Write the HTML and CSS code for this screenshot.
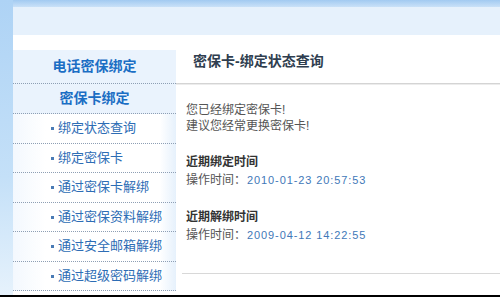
FILE: index.html
```html
<!doctype html>
<html>
    <head>
    <meta charset="utf-8">
    <title>密保卡</title>
    <link rel="stylesheet" href="styles.css">
    </head>

    <body>
        <div class="page">
            <div class="strip"></div>
            <div class="main">
                <div class="topbar"></div>
                <div class="band"></div>
                <div class="spacer"></div>
                <div class="content">
                    <div class="sidebar">
                        <div class="menu-head first">电话密保绑定</div>
                        <div class="menu-head">密保卡绑定</div>
                        <div class="menu-item">绑定状态查询</div>
                        <div class="menu-item">绑定密保卡</div>
                        <div class="menu-item">通过密保卡解绑</div>
                        <div class="menu-item">通过密保资料解绑</div>
                        <div class="menu-item">通过安全邮箱解绑</div>
                        <div class="menu-item">通过超级密码解绑</div>
                    </div>
                    <div class="panel">
                        <div class="panel-title">密保卡-绑定状态查询</div>
                        <div class="panel-body">
                            <p class="note">您已经绑定密保卡!<br>建议您经常更换密保卡!</p>
                            <div class="section">
                                <div class="sec-head">近期绑定时间</div>
                                <div class="sec-row">操作时间：<span class="date">2010-01-23 20:57:53</span></div>
                            </div>
                            <div class="section">
                                <div class="sec-head">近期解绑时间</div>
                                <div class="sec-row">操作时间：<span class="date">2009-04-12 14:22:55</span></div>
                            </div>
                            <div class="rule"></div>
                        </div>
                    </div>
                </div>
            </div>
        </div>
        <div class="bottom"></div>
    </body>
</html>
```

FILE: styles.css
```css
body {
    margin: 0;
    width: 500px;
    height: 297px;
    overflow: hidden;
    background: #fff;
    font-family: "Liberation Sans", "Noto Sans CJK SC", sans-serif;
}

.page {
    display: flex;
    height: 295px;
    overflow: hidden;
}

.strip {
    width: 13px;
    flex: none;
    background: linear-gradient(to bottom, #aed3f5 0%, #c4e0f8 60%, #e6f2fc 100%);
}

.main {
    flex: 1;
    display: flex;
    flex-direction: column;
}

.topbar {
    height: 7px;
    background: linear-gradient(to bottom, #a2caf1, #c9e1f8);
}

.band {
    height: 28px;
    background: #e6f1fc;
}

.spacer {
    height: 15px;
}

.content {
    display: flex;
    flex: 1;
}

.sidebar {
    width: 163px;
    flex: none;
}

.menu-head {
    height: 29px;
    line-height: 29px;
    text-align: center;
    font-size: 14px;
    font-weight: bold;
    color: #1b6ec4;
    background: #eaf3fd;
    border-bottom: 1px dotted #8e9fb4;
}

.menu-head.first {
    height: 33px;
    line-height: 33px;
}

.menu-item {
    height: 28.5px;
    line-height: 28.5px;
    font-size: 13px;
    color: #2d6db5;
    padding-left: 45px;
    position: relative;
    background: linear-gradient(to right, #f3f8fe 0%, #fff 20%, #fff 90%, #e6f1fc 100%);
    border-bottom: 1px dotted #8e9fb4;
}

.menu-item:before {
    content: "";
    position: absolute;
    left: 38px;
    top: 13px;
    width: 3px;
    height: 3px;
    background: #4a7bb5;
}

.panel {
    flex: 1;
}

.panel-title {
    height: 33px;
    padding-left: 17px;
    line-height: 22px;
    font-size: 14px;
    font-weight: bold;
    color: #2f3e4f;
    border-bottom: 1px solid #d4d4d4;
    box-shadow: 0 1px 0 #ececec;
}

.panel-body {
    padding: 18px 0 0 10px;
    font-size: 12px;
    color: #555;
}

.note {
    margin: 0;
    line-height: 16px;
}

.section {
    margin-top: 19px;
    line-height: 18px;
}

.sec-head {
    font-weight: bold;
    color: #333;
}

.date {
    font-size: 11px;
    letter-spacing: 0.9px;
    color: #3f78b8;
    margin-left: 1px;
}

.rule {
    margin: 29px 0 0 -4px;
    border-top: 1px solid #d8d8d8;
}

.bottom {
    height: 2px;
    background: #000;
}
```
